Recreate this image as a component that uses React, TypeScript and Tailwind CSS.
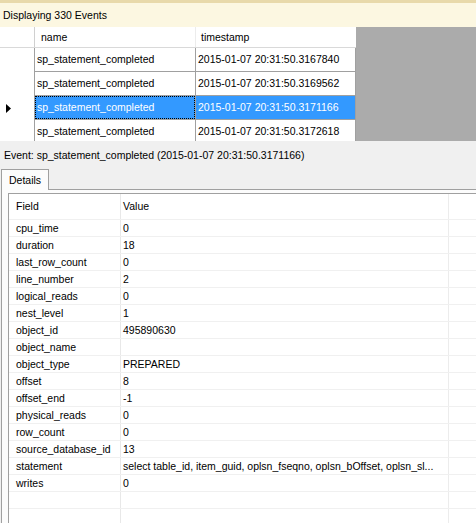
const EVENTS = [
  { name: "sp_statement_completed", timestamp: "2015-01-07 20:31:50.3167840" },
  { name: "sp_statement_completed", timestamp: "2015-01-07 20:31:50.3169562" },
  { name: "sp_statement_completed", timestamp: "2015-01-07 20:31:50.3171166", selected: true },
  { name: "sp_statement_completed", timestamp: "2015-01-07 20:31:50.3172618" },
];

const FIELDS: [string, string][] = [
  ["cpu_time", "0"],
  ["duration", "18"],
  ["last_row_count", "0"],
  ["line_number", "2"],
  ["logical_reads", "0"],
  ["nest_level", "1"],
  ["object_id", "495890630"],
  ["object_name", ""],
  ["object_type", "PREPARED"],
  ["offset", "8"],
  ["offset_end", "-1"],
  ["physical_reads", "0"],
  ["row_count", "0"],
  ["source_database_id", "13"],
  ["statement", "select table_id, item_guid, oplsn_fseqno, oplsn_bOffset, oplsn_sl..."],
  ["writes", "0"],
  ["", ""],
  ["", ""],
];

function RowArrow() {
  return (
    <svg width="5" height="9" viewBox="0 0 5 9">
      <polygon points="0,0 5,4.5 0,9" fill="#000" />
    </svg>
  );
}

function EventGrid() {
  return (
    <div className="h-[114px] shrink-0 bg-[#ababab] overflow-hidden">
      <div className="w-[356px] bg-white flex flex-col">
        <div className="flex h-[21px] shrink-0 border-b border-[#d9d9d9]">
          <div className="w-[35px] border-r border-[#d0d0d0]" />
          <div className="w-[161px] border-r border-[#ececec] flex items-center pl-[6px]">name</div>
          <div className="w-[160px] flex items-center pl-[5px]">timestamp</div>
        </div>
        {EVENTS.map((ev, i) => (
          <div key={i} className="flex h-[24px] shrink-0">
            <div className="w-[35px] border-r border-[#a0a0a0] flex items-center pl-[6px]">
              {ev.selected && <RowArrow />}
            </div>
            <div
              className={`w-[161px] border-r border-b border-[#a0a0a0] ${
                ev.selected ? "bg-[#3399ff] text-white" : ""
              }`}
            >
              <div
                className={`h-full flex items-center ${
                  ev.selected ? "border border-dotted border-black pl-[1px]" : "pl-[2px]"
                }`}
              >
                {ev.name}
              </div>
            </div>
            <div
              className={`w-[160px] border-r border-b border-[#a0a0a0] flex items-center pl-[2px] ${
                ev.selected ? "bg-[#3399ff] text-white" : ""
              }`}
            >
              {ev.timestamp}
            </div>
          </div>
        ))}
      </div>
    </div>
  );
}

function DetailsGrid() {
  return (
    <div className="flex-1 border-t border-l border-[#a0a0a0] bg-white overflow-hidden flex flex-col">
      <div className="flex h-[26px] shrink-0 border-b border-[#f0f0f0]">
        <div className="w-[112px] border-r border-[#e8e8e8] flex items-center pl-[7px]">Field</div>
        <div className="w-[328px] border-r border-[#ececec] flex items-center pl-[2px]">Value</div>
        <div className="flex-1" />
      </div>
      {FIELDS.map(([field, value], i) => (
        <div key={i} className="flex h-[17px] shrink-0 border-b border-[#f0f0f0]">
          <div className="w-[112px] border-r border-[#e8e8e8] flex items-center pl-[7px]">{field}</div>
          <div className="w-[328px] border-r border-[#ececec] flex items-center pl-[2px] whitespace-nowrap overflow-hidden">
            {value}
          </div>
          <div className="flex-1" />
        </div>
      ))}
    </div>
  );
}

export default function App() {
  return (
    <div className="w-[476px] h-[523px] overflow-hidden bg-[#f0f0f0] text-black text-[10.5px] leading-[13px] font-['Liberation_Sans',Arial,sans-serif] flex flex-col">
      <div className="h-[27px] shrink-0 border-t-[3px] border-[#e8d9aa] bg-[#fcf7e1] flex items-center pl-[3px]">
        Displaying 330 Events
      </div>
      <EventGrid />
      <div className="h-[28px] shrink-0 flex items-center pl-[4px] whitespace-nowrap">
        Event: sp_statement_completed (2015-01-07 20:31:50.3171166)
      </div>
      <div className="flex pl-[1px] shrink-0">
        <div className="relative z-10 -mb-px h-[21px] w-[48px] border border-b-0 border-[#a0a0a0] bg-[#fcfcfc] flex items-center pl-[7px]">
          Details
        </div>
      </div>
      <div className="flex-1 min-h-0 ml-[1px] border-t border-l border-[#a0a0a0] bg-[#fcfcfc] pt-[3px] pl-[6px] flex flex-col">
        <DetailsGrid />
      </div>
    </div>
  );
}
